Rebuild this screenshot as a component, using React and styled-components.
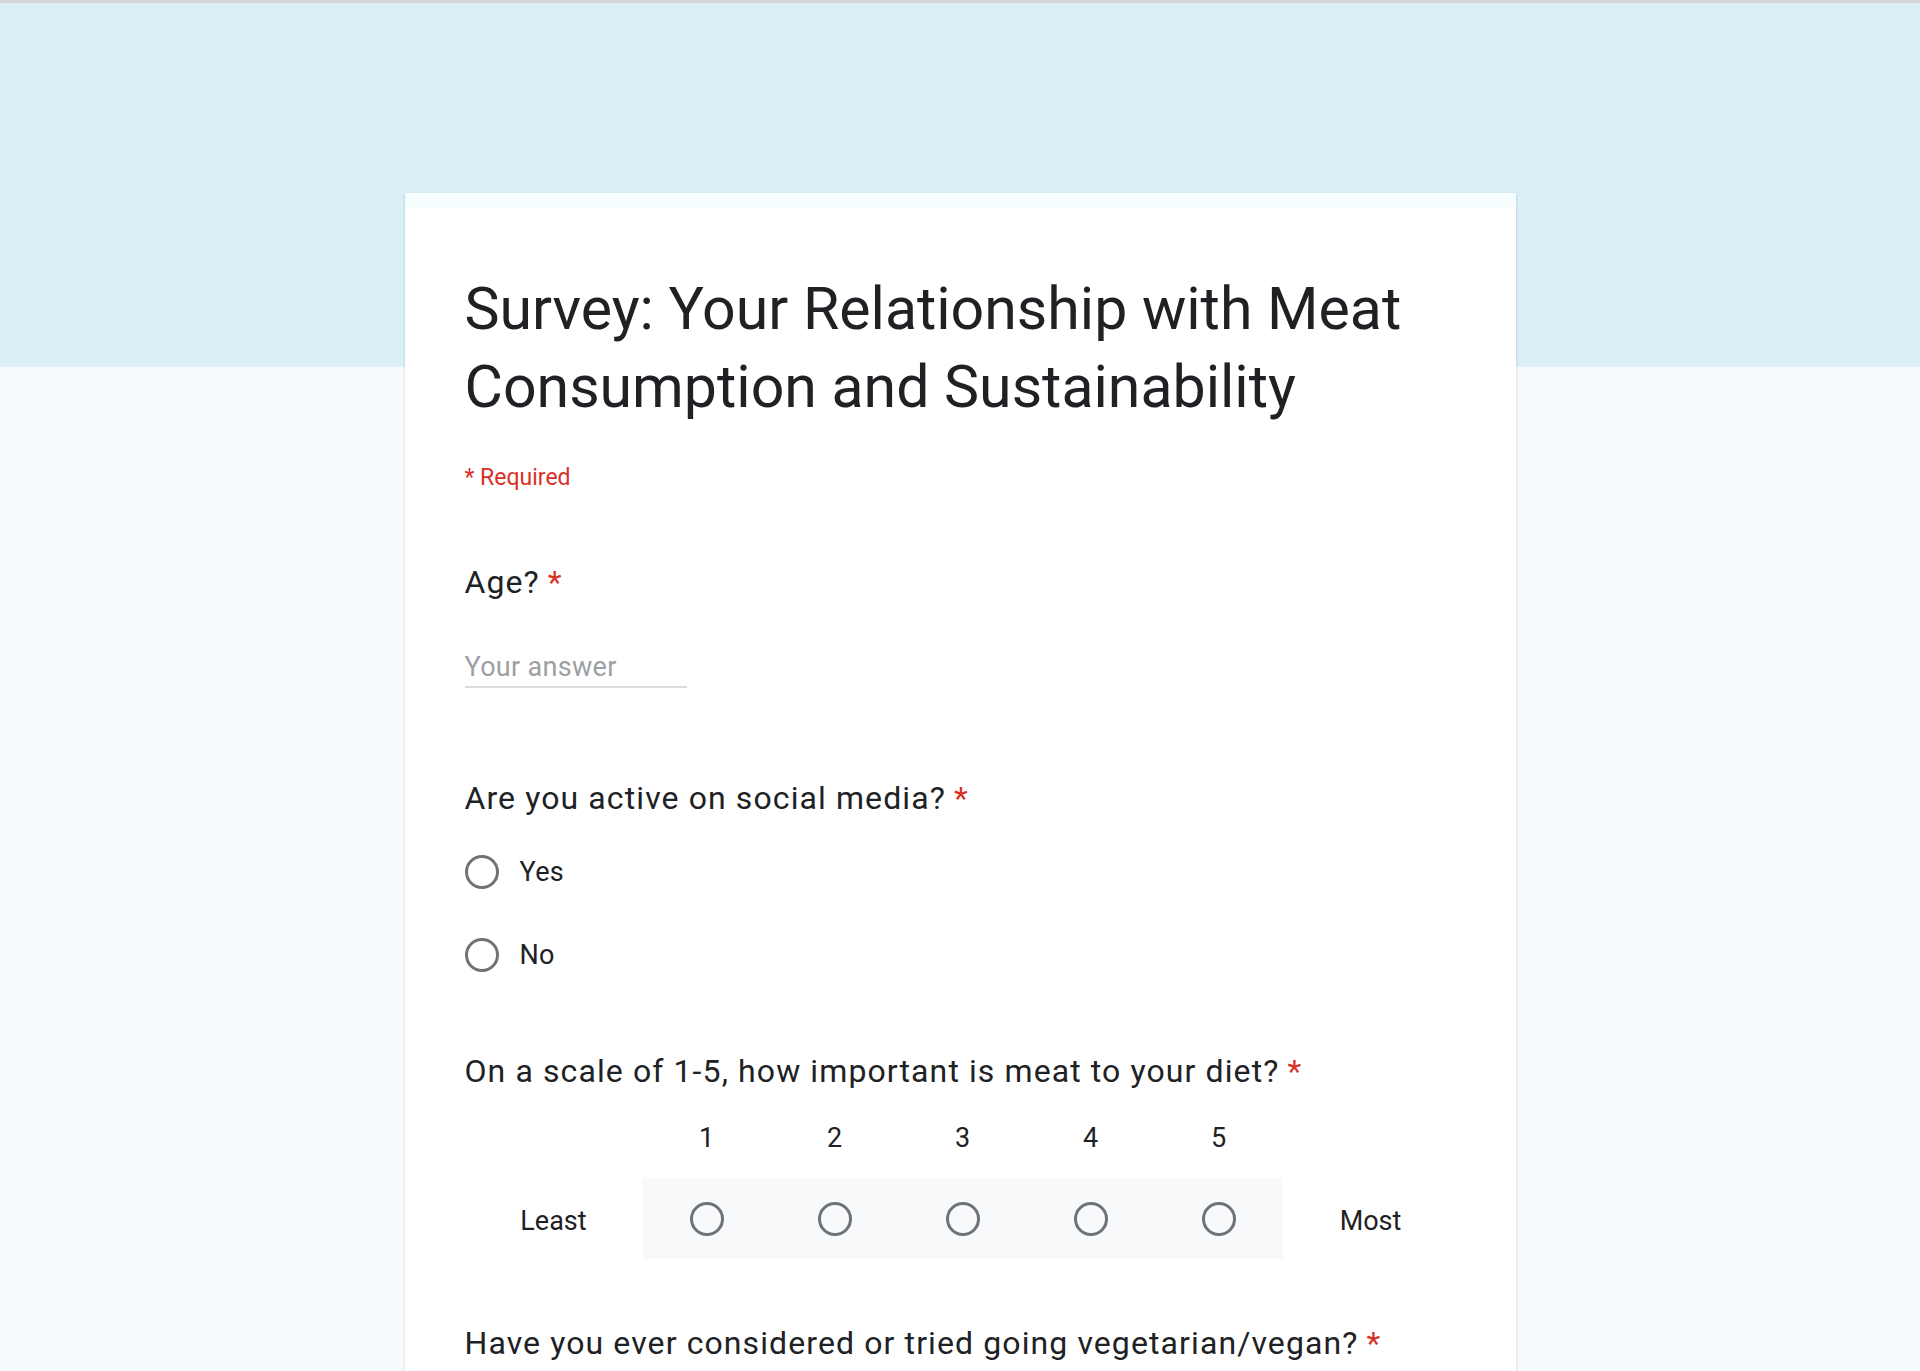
import React from 'react';
import styled, { createGlobalStyle } from 'styled-components';

const GlobalStyle = createGlobalStyle`
  html, body {
    margin: 0;
    padding: 0;
  }
  body {
    font-family: Roboto, "Noto Sans", Arial, sans-serif;
    color: #202124;
    background-color: #f5fbfd;
  }
`;

const Page = styled.div`
  min-height: 1371px;
  border-top: 3px solid #d3d6d8;
  background: linear-gradient(to bottom, #dbeff6 0px, #dbeff6 364px, #f5fbfd 364px);
  overflow: hidden;
`;

const Card = styled.div`
  width: 1111px;
  margin: 190px auto 0;
  background-color: #ffffff;
  border-top: 14px solid #f6fdff;
  box-shadow: 0 2px 1px -1px rgba(0, 0, 0, 0.2), 0 1px 1px 0 rgba(0, 0, 0, 0.14), 0 1px 3px 0 rgba(0, 0, 0, 0.12);
  padding: 63px 60px 200px;
  box-sizing: border-box;
`;

const Title = styled.h1`
  margin: 0;
  font-size: 59px;
  line-height: 78px;
  font-weight: 400;
  color: #202124;
`;

const Required = styled.div`
  margin-top: 37px;
  font-size: 23px;
  line-height: 30px;
  color: #d93025;
`;

const Question = styled.div`
  margin-top: ${p => p.$gap}px;
  font-size: 32px;
  line-height: 40px;
  letter-spacing: 1.1px;
  color: #202124;
`;

const Star = styled.span`
  color: #d93025;
  margin-left: 8px;
`;

const AnswerInput = styled.div`
  margin-top: 46px;
  width: 222px;
  font-size: 27px;
  line-height: 38px;
  letter-spacing: 0.3px;
  color: #9aa0a6;
  border-bottom: 2px solid #dadce0;
`;

const Options = styled.div`
  margin-top: 12px;
  display: flex;
  flex-direction: column;
`;

const Option = styled.label`
  display: flex;
  align-items: center;
  height: 83px;
  gap: 21px;
  font-size: 27px;
  letter-spacing: 0.3px;
  color: #202124;
`;

const Radio = styled.span`
  display: inline-block;
  width: 34px;
  height: 34px;
  box-sizing: border-box;
  border: 3px solid #6f7377;
  border-radius: 50%;
  flex-shrink: 0;
`;

const Scale = styled.div`
  margin-top: 29px;
  display: grid;
  grid-template-columns: 178px repeat(5, 128px) 176px;
  grid-template-rows: 36px 81px;
  row-gap: 22px;
  font-size: 27px;
`;

const Number = styled.div`
  grid-row: 1;
  grid-column: ${p => p.$col};
  display: flex;
  justify-content: center;
  align-items: center;
  color: #202124;
`;

const EndLabel = styled.div`
  grid-row: 2;
  grid-column: ${p => p.$col};
  display: flex;
  justify-content: center;
  align-items: center;
  padding-top: 4px;
  color: #202124;
`;

const RadioTrack = styled.div`
  grid-row: 2;
  grid-column: 2 / 7;
  display: grid;
  grid-template-columns: repeat(5, 128px);
  background-color: #f8f9fa;
`;

const RadioCell = styled.div`
  display: flex;
  justify-content: center;
  align-items: center;
`;

export default function App() {
  const steps = [1, 2, 3, 4, 5];
  return (
    <Page>
      <GlobalStyle />
      <Card>
        <Title>Survey: Your Relationship with Meat Consumption and Sustainability</Title>
        <Required>* Required</Required>

        <Question $gap={69}>Age?<Star>*</Star></Question>
        <AnswerInput>Your answer</AnswerInput>

        <Question $gap={90}>Are you active on social media?<Star>*</Star></Question>
        <Options>
          <Option><Radio />Yes</Option>
          <Option><Radio />No</Option>
        </Options>

        <Question $gap={55}>On a scale of 1-5, how important is meat to your diet?<Star>*</Star></Question>
        <Scale>
          {steps.map(n => (
            <Number key={n} $col={n + 1}>{n}</Number>
          ))}
          <EndLabel $col={1}>Least</EndLabel>
          <RadioTrack>
            {steps.map(n => (
              <RadioCell key={n}><Radio /></RadioCell>
            ))}
          </RadioTrack>
          <EndLabel $col={7}>Most</EndLabel>
        </Scale>

        <Question $gap={64}>Have you ever considered or tried going vegetarian/vegan?<Star>*</Star></Question>
      </Card>
    </Page>
  );
}
